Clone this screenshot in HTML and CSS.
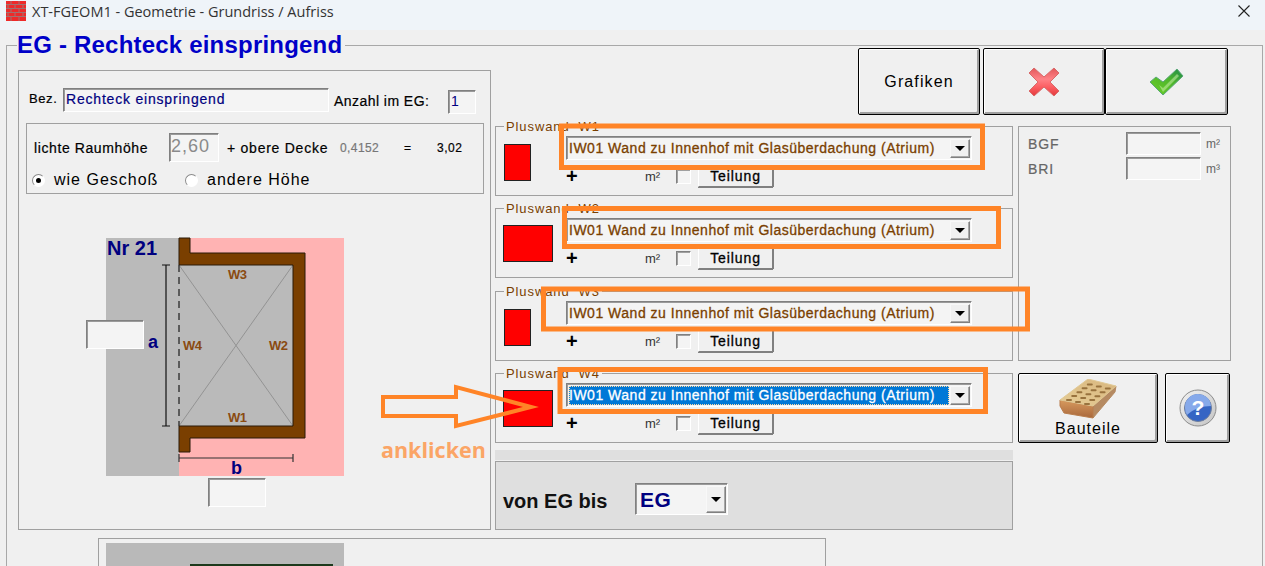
FILE: index.html
```html
<!DOCTYPE html>
<html lang="de">
<head>
  <meta charset="UTF-8" />
  <title>XT-FGEOM1 - Geometrie - Grundriss / Aufriss</title>
  <link rel="stylesheet" href="styles.css">
</head>
<body>

  <!-- Title bar -->
  <header class="titlebar">
    <svg class="app-icon" width="20" height="20" viewBox="0 0 20 20">
      <rect width="20" height="20" fill="#ee2a2a"/>
      <path d="M0 3.5H20M0 7.5H20M0 11.5H20M0 15.5H20M5 0V3.5M13 0V3.5M2 3.5V7.5M9 3.5V7.5M17 3.5V7.5M5 7.5V11.5M13 7.5V11.5M2 11.5V15.5M9 11.5V15.5M17 11.5V15.5M5 15.5V20M13 15.5V20" stroke="#a07272" stroke-width="1" fill="none"/>
    </svg>
    <span class="title-text">XT-FGEOM1 - Geometrie - Grundriss / Aufriss</span>
    <svg class="close-icon" width="12" height="12" viewBox="0 0 12 12">
      <path d="M0.5 0.5L11.5 11.5M11.5 0.5L0.5 11.5" stroke="#222" stroke-width="1.1" fill="none"/>
    </svg>
  </header>

  <fieldset class="dialog">
    <legend>EG - Rechteck einspringend</legend>

    <div class="dialog-main">

      <!-- Left panel -->
      <section class="panel-left">
        <div class="bez-row">
          <span class="bez-label">Bez.</span>
          <div class="input bez-input">Rechteck einspringend</div>
          <span class="anzahl-label">Anzahl im EG:</span>
          <div class="input anzahl-input">1</div>
        </div>

        <div class="height-group">
          <div class="height-row">
            <span class="raum-label">lichte Raumhöhe</span>
            <div class="input raum-input">2,60</div>
            <span class="decke-label">+ obere Decke</span>
            <span class="decke-value">0,4152</span>
            <span class="equals">=</span>
            <span class="sum">3,02</span>
          </div>
          <div class="radio-row">
            <span class="radio radio-on"></span>
            <span class="radio-text geschoss">wie Geschoß</span>
            <span class="radio"></span>
            <span class="radio-text">andere Höhe</span>
          </div>
        </div>

        <div class="figure">
          <svg width="238" height="238" viewBox="0 0 238 238">
            <rect width="238" height="238" fill="#ffb3b3"/>
            <rect width="73" height="238" fill="#bababa"/>
            <rect x="73" y="27" width="114" height="161" fill="#bababa"/>
            <path d="M73 27L187 188M187 27L73 188" stroke="#939393" stroke-width="1" fill="none"/>
            <path d="M73 0H84V15H199V200H84V214H73V188H187V27H73Z" fill="#7a3f00" stroke="#2a1a08" stroke-width="1"/>
            <path d="M73 27V188" stroke="#333" stroke-width="1.4" stroke-dasharray="7 5" fill="none"/>
            <path d="M60 27V188M56 27H64M56 188H64" stroke="#111" stroke-width="1.2" fill="none"/>
            <path d="M73 220H187M73 216V224M187 216V224" stroke="#333" stroke-width="1.2" fill="none"/>
            <text class="fig-nr" x="1" y="17">Nr 21</text>
            <text class="fig-dim" x="42" y="110">a</text>
            <text class="fig-dim" x="125" y="236">b</text>
            <text class="fig-wall" x="122" y="41">W3</text>
            <text class="fig-wall" x="77" y="112">W4</text>
            <text class="fig-wall" x="163" y="112">W2</text>
            <text class="fig-wall" x="122" y="184">W1</text>
          </svg>
          <div class="input dim-input dim-a"></div>
          <div class="input dim-input dim-b"></div>
        </div>
      </section>

      <div class="side">
        <div class="toolbar">
          <button class="btn btn-top">Grafiken</button>
          <button class="btn btn-top">
            <svg width="32" height="30" viewBox="0 0 32 30">
              <defs>
                <linearGradient id="redX" x1="0" y1="0" x2="0" y2="1">
                  <stop offset="0" stop-color="#e2575a"/>
                  <stop offset="0.4" stop-color="#ff8286"/>
                  <stop offset="0.7" stop-color="#fb5c60"/>
                  <stop offset="1" stop-color="#e23a3c"/>
                </linearGradient>
              </defs>
              <path d="M6 1L16 10L26 1L31 6L22 15L31 24L26 29L16 20L6 29L1 24L10 15L1 6Z" fill="url(#redX)" stroke="#d86a6a" stroke-width="1" stroke-linejoin="round"/>
            </svg>
          </button>
          <button class="btn btn-top">
            <svg width="35" height="28" viewBox="0 0 35 28">
              <defs>
                <linearGradient id="greenCheck" x1="0" y1="1" x2="1" y2="0">
                  <stop offset="0" stop-color="#6ed028"/>
                  <stop offset="0.6" stop-color="#4db52c"/>
                  <stop offset="1" stop-color="#1f8a4a"/>
                </linearGradient>
              </defs>
              <path d="M1 14L7 9L14 14L28 1L34 8L14 27Z" fill="url(#greenCheck)" stroke="#5aa878" stroke-width="1" stroke-linejoin="round"/>
              <path d="M10 17L14 20L28 6L30 8L14 24Z" fill="#c8f0a8" opacity="0.55"/>
            </svg>
          </button>
        </div>

        <div class="side-grid">
          <!-- Wall rows -->
          <div class="walls">
            <fieldset class="wall">
              <legend>Pluswand&nbsp; W1</legend>
              <div class="wall-body">
                <div class="swatch swatch-narrow"></div>
                <div class="wall-fields">
                  <div class="combo">
                    <div class="combo-text">IW01 Wand zu Innenhof mit Glasüberdachung (Atrium)</div>
                    <div class="combo-arrow"><span></span></div>
                  </div>
                  <div class="wall-row">
                    <span class="plus">+</span>
                    <span class="unit">m²</span>
                    <span class="check"></span>
                    <button class="btn-small">Teilung</button>
                  </div>
                </div>
              </div>
            </fieldset>

            <fieldset class="wall">
              <legend>Pluswand&nbsp; W2</legend>
              <div class="wall-body">
                <div class="swatch swatch-wide"></div>
                <div class="wall-fields">
                  <div class="combo">
                    <div class="combo-text">IW01 Wand zu Innenhof mit Glasüberdachung (Atrium)</div>
                    <div class="combo-arrow"><span></span></div>
                  </div>
                  <div class="wall-row">
                    <span class="plus">+</span>
                    <span class="unit">m²</span>
                    <span class="check"></span>
                    <button class="btn-small">Teilung</button>
                  </div>
                </div>
              </div>
            </fieldset>

            <fieldset class="wall wall-third">
              <legend>Pluswand&nbsp; W3</legend>
              <div class="wall-body">
                <div class="swatch swatch-narrow"></div>
                <div class="wall-fields">
                  <div class="combo">
                    <div class="combo-text">IW01 Wand zu Innenhof mit Glasüberdachung (Atrium)</div>
                    <div class="combo-arrow"><span></span></div>
                  </div>
                  <div class="wall-row">
                    <span class="plus">+</span>
                    <span class="unit">m²</span>
                    <span class="check"></span>
                    <button class="btn-small">Teilung</button>
                  </div>
                </div>
              </div>
            </fieldset>

            <fieldset class="wall">
              <legend>Pluswand&nbsp; W4</legend>
              <div class="wall-body">
                <div class="swatch swatch-wide"></div>
                <div class="wall-fields">
                  <div class="combo">
                    <div class="combo-text combo-selected">IW01 Wand zu Innenhof mit Glasüberdachung (Atrium)</div>
                    <div class="combo-arrow"><span></span></div>
                  </div>
                  <div class="wall-row">
                    <span class="plus">+</span>
                    <span class="unit">m²</span>
                    <span class="check"></span>
                    <button class="btn-small">Teilung</button>
                  </div>
                </div>
              </div>
            </fieldset>

            <div class="grey-bar"></div>
            <div class="floor-panel">
              <span class="floor-label">von EG bis</span>
              <div class="combo floor-combo">
                <div class="combo-text">EG</div>
                <div class="combo-arrow"><span></span></div>
              </div>
            </div>
          </div>

          <!-- Right column -->
          <div class="right-col">
            <div class="totals">
              <div class="totals-row">
                <span class="totals-label">BGF</span>
                <div class="input totals-input"></div>
                <span class="totals-unit">m²</span>
              </div>
              <div class="totals-row">
                <span class="totals-label">BRI</span>
                <div class="input totals-input"></div>
                <span class="totals-unit">m³</span>
              </div>
            </div>
            <div class="right-buttons">
              <button class="btn btn-bauteile">
                <svg width="58" height="42" viewBox="0 0 58 42">
                  <defs>
                    <linearGradient id="brickTop" x1="0" y1="1" x2="1" y2="0">
                      <stop offset="0" stop-color="#e6cd96"/>
                      <stop offset="1" stop-color="#d8b67e"/>
                    </linearGradient>
                    <linearGradient id="brickFront" x1="0" y1="0" x2="0" y2="1">
                      <stop offset="0" stop-color="#d79a5e"/>
                      <stop offset="1" stop-color="#a9683c"/>
                    </linearGradient>
                  </defs>
                  <path d="M34 27L57 7L56 13L34 39Z" fill="#b58a62" stroke="#b58a62" stroke-linejoin="round"/>
                  <path d="M1 21L34 27V39L5 34L1 27Z" fill="url(#brickFront)" stroke="#b97d4c" stroke-linejoin="round"/>
                  <path d="M1 21L29 0L57 7L34 27Z" fill="url(#brickTop)" stroke="#e0c894" stroke-linejoin="round"/>
                  <path d="M8 21h4M13.2 17.1h4M18.4 13.2h4M23.6 9.3h4M28.8 5.4h4M17 23h4M22.2 19.1h4M27.4 15.2h4M32.6 11.3h4M37.8 7.4h4M26 25h4M31.2 21.1h4M36.4 17.2h4M41.6 13.3h4M46.8 9.4h4" stroke="#98723e" stroke-width="2" stroke-linecap="round" fill="none"/>
                </svg>
                <span class="bauteile-text">Bauteile</span>
              </button>
              <button class="btn btn-help">
                <svg width="38" height="38" viewBox="0 0 38 38">
                  <defs>
                    <linearGradient id="helpRing" x1="0" y1="0" x2="1" y2="1">
                      <stop offset="0" stop-color="#f2f2f2"/>
                      <stop offset="1" stop-color="#c4c4c4"/>
                    </linearGradient>
                  </defs>
                  <circle cx="19" cy="19" r="18" fill="url(#helpRing)" stroke="#8c8c8c" stroke-width="1"/>
                  <circle cx="19" cy="19" r="13.5" fill="#3565c4" stroke="#6f7f9c" stroke-width="1"/>
                  <path d="M6 19A13 13 0 0 1 32 17C24 17 14 20 8 26A13 13 0 0 1 6 19Z" fill="#86a9ea"/>
                  <text class="help-mark" x="19" y="26">?</text>
                </svg>
              </button>
            </div>
          </div>
        </div>
      </div>
    </div>

    <!-- Panel that runs off the bottom of the window -->
    <section class="panel-below">
      <div class="below-image"><span class="below-line"></span></div>
    </section>
  </fieldset>

  <!-- Orange annotations drawn on top of the screenshot -->
  <svg class="annotations" width="1265" height="566" viewBox="0 0 1265 566">
    <g fill="none" stroke="#ff8427" stroke-width="5">
      <rect x="561.5" y="126" width="421" height="41.5"/>
      <rect x="564.5" y="208.5" width="434" height="38"/>
      <rect x="543.5" y="289" width="484" height="40"/>
      <rect x="560" y="369.5" width="425.5" height="42"/>
      <path stroke-width="4" d="M383 397H456V387L531 407L456 426V416H383Z"/>
    </g>
  </svg>
  <div class="anklicken">anklicken</div>

</body>
</html>
```

FILE: styles.css
```css
* {
  box-sizing: border-box;
}

html, body {
  height: 566px;
  overflow: hidden;
}

body {
  margin: 0;
  background: #f0f0f0;
  font-family: "Liberation Sans", Arial, sans-serif;
  color: #000;
  position: relative;
}

/* title bar */
.titlebar {
  height: 30px;
  background: #eff4f9;
  display: flex;
  align-items: flex-start;
  padding: 1px 15px 0 6px;
}

.app-icon {
  flex: none;
}

.title-text {
  font-family: "Open Sans", sans-serif;
  font-size: 14.5px;
  line-height: 21px;
  color: #333;
  margin-left: 6px;
}

.close-icon {
  margin-left: auto;
  margin-top: 4px;
}

/* outer group */
.dialog {
  margin: 1px 2px 0 6px;
  padding: 0 0 0 11px;
  border: 1px solid #a8a8a8;
  border-bottom: none;
  border-radius: 0;
  min-width: 0;
}

.dialog > legend {
  padding: 0 3px 0 0;
  margin-left: -1px;
  font-size: 24px;
  line-height: 28px;
  font-weight: bold;
  letter-spacing: 0.2px;
  color: #0000c8;
}

.dialog-main {
  display: flex;
  gap: 4px;
  margin-top: -11px;
}

/* left panel */
.panel-left {
  width: 473px;
  height: 460px;
  margin-top: 22px;
  border: 1px solid #a0a0a0;
  padding: 17px 6px 0 7px;
  flex: none;
}

.input {
  background: #f4f4f4;
  border: 1px solid;
  border-color: #808080 #fff #fff #808080;
  box-shadow: inset 1px 1px 0 #9a9a9a;
}

.bez-row {
  display: flex;
  align-items: flex-start;
  padding-left: 3px;
}

.bez-label {
  font-size: 13px;
  line-height: 22px;
  letter-spacing: 0.6px;
  -webkit-text-stroke: 0.2px #000;
  width: 34px;
}

.bez-input {
  width: 266px;
  height: 24px;
  font-size: 14px;
  line-height: 20px;
  letter-spacing: 0.8px;
  -webkit-text-stroke: 0.2px #000080;
  color: #000080;
  padding-left: 2px;
}

.anzahl-label {
  font-size: 14px;
  line-height: 26px;
  letter-spacing: 0.45px;
  -webkit-text-stroke: 0.2px #000;
  margin-left: 5px;
  width: 114px;
}

.anzahl-input {
  width: 28px;
  height: 24px;
  margin-top: 2px;
  font-size: 14px;
  line-height: 21px;
  color: #000080;
  padding-left: 2px;
}

.height-group {
  width: 458px;
  height: 71px;
  margin-top: 9px;
  border: 1px solid #a0a0a0;
  padding: 9px 0 0 7px;
}

.height-row {
  display: flex;
  align-items: center;
  height: 29px;
  font-size: 14px;
  -webkit-text-stroke: 0.2px #000;
}

.raum-label {
  width: 135px;
  letter-spacing: 0.6px;
}

.raum-input {
  width: 50px;
  height: 29px;
  font-size: 18px;
  line-height: 25px;
  letter-spacing: 1px;
  color: #8a8a8a;
  -webkit-text-stroke: 0;
  padding-left: 1px;
}

.decke-label {
  margin-left: 8px;
  width: 113px;
  letter-spacing: 0.75px;
}

.decke-value {
  color: #777;
  font-size: 12px;
  letter-spacing: 0.4px;
  -webkit-text-stroke: 0.2px #777;
  width: 64px;
}

.equals {
  width: 33px;
  font-size: 12px;
}

.sum {
  font-size: 12px;
  letter-spacing: 0.5px;
}

.radio-row {
  display: flex;
  align-items: center;
  height: 20px;
  margin-top: 8px;
  margin-left: -2px;
}

.radio {
  width: 13px;
  height: 13px;
  border-radius: 50%;
  background: #fff;
  border: 1px solid #9a9a9a;
  border-color: #8a8a8a #fff #fff #8a8a8a;
  position: relative;
  flex: none;
}

.radio-on::after {
  content: "";
  position: absolute;
  left: 3px;
  top: 3px;
  width: 5px;
  height: 5px;
  border-radius: 50%;
  background: #000;
}

.radio-text {
  margin-left: 9px;
  font-size: 16px;
  letter-spacing: 1px;
}

.geschoss {
  width: 131px;
}

/* figure */
.figure {
  position: relative;
  width: 238px;
  height: 238px;
  margin: 44px 0 0 80px;
}

.figure svg {
  display: block;
  overflow: visible;
}

.fig-nr {
  font-size: 20px;
  font-weight: bold;
  fill: #000080;
}

.fig-dim {
  font-size: 18px;
  font-weight: bold;
  fill: #000080;
}

.fig-wall {
  font-size: 13px;
  font-weight: bold;
  fill: #8a4b12;
  letter-spacing: -0.5px;
}

.dim-input {
  position: absolute;
  width: 58px;
  height: 29px;
}

.dim-a {
  left: -20px;
  top: 82px;
}

.dim-b {
  left: 102px;
  top: 240px;
}

/* right side */
.side {
  flex: none;
  width: 736px;
}

.toolbar {
  display: flex;
  justify-content: flex-end;
  margin-right: 3px;
  height: 67px;
}

.btn {
  background: #f0f0f0;
  border: 1px solid #000;
  border-radius: 2px;
  box-shadow: inset 1px 1px 0 #fff, inset -2px -2px 0 #a0a0a0;
  font-family: "Liberation Sans", Arial, sans-serif;
  color: #000;
  padding: 0;
  display: flex;
  align-items: center;
  justify-content: center;
}

.btn-top {
  width: 122px;
  height: 67px;
  font-size: 16px;
  letter-spacing: 1.1px;
}

.btn-top:first-child {
  margin-right: 3px;
}

.btn-top:last-child {
  width: 123px;
}

.side-grid {
  display: grid;
  grid-template-columns: 518px 213px;
  column-gap: 5px;
  margin-top: 4px;
}

/* wall rows */
.walls {
  display: flex;
  flex-direction: column;
  gap: 5px;
}

.wall {
  margin: 0;
  height: 77px;
  padding: 2px 0 0 7px;
  border: 1px solid #a0a0a0;
  min-width: 0;
}

.wall-third {
  margin-top: 1px;
}

.wall > legend {
  margin-left: 1px;
  padding: 0 2px;
  font-size: 13px;
  line-height: 15px;
  letter-spacing: 0.9px;
  color: #7a3f00;
}

.wall-body {
  display: flex;
}

.swatch {
  background: #ff0000;
  border: 1px solid #222;
  margin-top: 8px;
  height: 37px;
  flex: none;
}

.swatch-narrow {
  width: 27px;
  margin-right: 35px;
  margin-left: 1px;
}

.swatch-wide {
  width: 50px;
  margin-top: 7px;
  margin-right: 13px;
}

.wall-fields {
  flex: none;
}

.combo {
  display: flex;
  width: 406px;
  height: 24px;
  background: #f4f4f4;
  border: 1px solid;
  border-color: #808080 #fff #fff #808080;
  box-shadow: inset 1px 1px 0 #9a9a9a;
  padding: 2px 1px 1px 2px;
}

.combo-text {
  flex: 1;
  font-size: 14px;
  line-height: 19px;
  letter-spacing: 0.51px;
  -webkit-text-stroke: 0.3px currentColor;
  color: #7a3f00;
  white-space: nowrap;
  overflow: hidden;
}

.combo-selected {
  background: #0078d7;
  color: #fff;
  outline: 1px dotted #ffd9a0;
  outline-offset: -1px;
  margin-right: 1px;
}

.combo-arrow {
  width: 20px;
  flex: none;
  background: #f0f0f0;
  border: 1px solid;
  border-color: #f8f8f8 #808080 #808080 #f8f8f8;
  box-shadow: inset -1px -1px 0 #a8a8a8;
  display: flex;
  align-items: center;
  justify-content: center;
}

.combo-arrow span {
  width: 0;
  height: 0;
  border-left: 5px solid transparent;
  border-right: 5px solid transparent;
  border-top: 5px solid #000;
}

.wall-row {
  display: flex;
  align-items: center;
  height: 22px;
  margin-top: 5px;
}

.plus {
  width: 79px;
  font-size: 20px;
  font-weight: bold;
  line-height: 22px;
}

.unit {
  width: 31px;
  font-size: 13px;
  color: #333;
}

.check {
  width: 15px;
  height: 15px;
  background: #f4f4f4;
  border: 1px solid;
  border-color: #808080 #fff #fff #808080;
  box-shadow: inset 1px 1px 0 #a0a0a0;
}

.btn-small {
  margin-left: 7px;
  width: 75px;
  height: 22px;
  background: #f0f0f0;
  border: 1px solid;
  border-color: #fff #808080 #808080 #fff;
  box-shadow: 0 1px 0 #808080, 1px 0 0 #808080;
  padding: 0;
  font-family: "Liberation Sans", Arial, sans-serif;
  font-size: 14px;
  letter-spacing: 0.9px;
  -webkit-text-stroke: 0.3px #000;
  color: #000;
}

.grey-bar {
  height: 10px;
  margin-top: 2px;
  margin-bottom: -4px;
  background: #dfdfdf;
}

.floor-panel {
  height: 69px;
  background: #dfdfdf;
  border: 1px solid #a0a0a0;
  display: flex;
  align-items: center;
  padding: 9px 0 0 7px;
}

.floor-label {
  width: 132px;
  font-size: 20px;
  font-weight: bold;
  color: #111;
  padding-top: 2px;
}

.floor-combo {
  width: 93px;
  height: 32px;
  margin-top: -3px;
}

.floor-combo .combo-text {
  font-size: 21px;
  font-weight: bold;
  line-height: 27px;
  color: #000080;
  padding-left: 2px;
  letter-spacing: 0.5px;
  -webkit-text-stroke: 0;
}

/* right column */
.right-col {
  padding-top: 7px;
}

.totals {
  height: 235px;
  border: 1px solid #a0a0a0;
  padding: 4px 0 0 9px;
}

.totals-row {
  display: flex;
  align-items: center;
  height: 25px;
}

.totals-label {
  width: 98px;
  font-size: 14px;
  letter-spacing: 0.9px;
  -webkit-text-stroke: 0.2px #666;
  color: #666;
}

.totals-input {
  width: 75px;
  height: 23px;
}

.totals-unit {
  margin-left: 5px;
  font-size: 12px;
  color: #666;
}

.right-buttons {
  display: flex;
  gap: 7px;
  margin-top: 12px;
}

.btn-bauteile {
  width: 140px;
  height: 70px;
  flex-direction: column;
}

.bauteile-text {
  font-size: 16px;
  letter-spacing: 1px;
  line-height: 18px;
  margin-top: -1px;
}

.btn-help {
  width: 65px;
  height: 70px;
}

.help-mark {
  font-size: 21px;
  font-weight: bold;
  fill: #fff;
  text-anchor: middle;
}

/* panel below */
.panel-below {
  width: 728px;
  height: 60px;
  margin: 8px 0 0 80px;
  border: 1px solid #a0a0a0;
  padding: 4px 0 0 7px;
}

.below-image {
  width: 238px;
  height: 60px;
  background: #b9b9b9;
  padding: 21px 0 0 84px;
}

.below-line {
  display: block;
  width: 143px;
  height: 2px;
  background: #1c3a1c;
}

/* annotations */
.annotations {
  position: absolute;
  left: 0;
  top: 0;
  pointer-events: none;
}

.anklicken {
  position: absolute;
  left: 381px;
  top: 436px;
  font-family: "Open Sans", sans-serif;
  font-size: 21.5px;
  font-weight: 700;
  line-height: 28px;
  color: #fba566;
}
```
